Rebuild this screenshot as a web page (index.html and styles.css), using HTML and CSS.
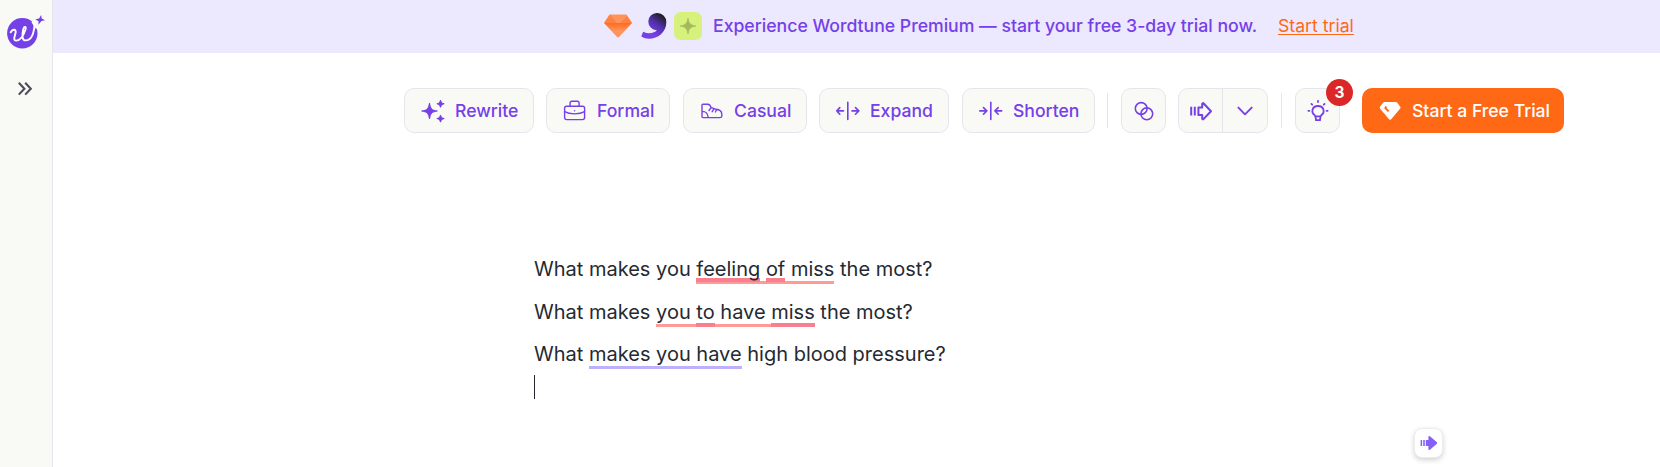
FILE: index.html
```html
<!DOCTYPE html>
<html lang="en">
<head>
<meta charset="utf-8">
<title>Wordtune Editor</title>
<link rel="stylesheet" href="styles.css">
</head>
<body>
<div class="app">
  <aside class="sidebar">
    <svg class="logo" width="40" height="40" viewBox="0 0 40 40">
      <circle cx="16.3" cy="21.2" r="15.2" fill="#7540e8"/>
      <path d="M25.5 10.5L30 3.5L37 12L30 17Z" fill="#f9faf5"/>
      <path d="M4.7 20.3C6.8 16.5 10.7 17 9.5 21.2C8.2 25.5 7.2 28.8 10.4 28.6C14.8 28.3 18 22 19.5 17.5C20.5 14 18 14 17.2 17.5C16 22.5 15.8 28.3 19.5 28.4C25.5 28.5 28.4 20.5 28.7 9.5" fill="none" stroke="#fff" stroke-width="1.9" stroke-linecap="round"/>
      <path d="M35.1 3L35.7 6.6L39.1 8.2L35.5 9.1L32.4 12.7L32.6 9.2L29.3 7.2L33.1 6.4Z" fill="#7540e8"/>
    </svg>
    <svg class="expand" width="14" height="14" viewBox="0 0 14 14" fill="none" stroke="#4b4b59" stroke-width="2.1"><path d="M.8 .8L6.4 6.7L.8 12.6M7.2 .8L12.8 6.7L7.2 12.6"/></svg>
  </aside>
  <main class="main">
    <div class="banner">
      <svg class="gem" width="28" height="24" viewBox="0 0 28 24">
        <defs><linearGradient id="gem-low" x2="0" y2="1"><stop stop-color="#ff6b1f"/><stop offset=".55" stop-color="#ff935c"/></linearGradient></defs>
        <path d="M5.5.5H22.5L28 9H0Z" fill="#ff935c"/><path d="M0 9L6 .8L13 9ZM16 9L28 9L23 2Z" fill="#ff8142"/><path d="M0 9H28L15.2 22.8Q14 24 12.8 22.8Z" fill="url(#gem-low)"/>
      </svg>
      <svg class="comma" width="26" height="26" viewBox="0 0 26 26">
        <defs><linearGradient id="ink" x1=".9" y1=".1" x2=".4" y2=".8"><stop offset=".05" stop-color="#202024"/><stop offset=".5" stop-color="#5130ad"/><stop offset="1" stop-color="#7540e8"/></linearGradient></defs>
        <path d="M16.2 0A9 9 0 0 1 25.3 9.5C25.3 19 17 25.8 8 25.8Q3.5 25.8.3 23.4L2.1 18.8Q9 22 14.5 18.5Q16 17.6 15.7 17.2A8.6 8.6 0 1 1 16.2 0Z" fill="url(#ink)"/>
      </svg>
      <svg class="tile" width="28" height="28" viewBox="0 0 28 28"><rect width="28" height="28" rx="6.5" fill="#d7f27c"/><path d="M14 6C14.8 11.5 16.5 13.2 22 14C16.5 14.8 14.8 16.5 14 22C13.2 16.5 11.5 14.8 6 14C11.5 13.2 13.2 11.5 14 6Z" fill="#a3b85f" stroke="#a3b85f" stroke-width=".7"/></svg>
      <span class="banner-text">Experience Wordtune Premium — start your free 3-day trial now.</span>
      <a class="banner-link">Start trial</a>
    </div>
    <div class="toolbar">
      <button class="btn rewrite"><svg width="24" height="24" viewBox="0 0 24 24" fill="#7540e8" stroke="#7540e8" stroke-linejoin="round"><path d="M8.5 4C9.5 9.8 10.7 11.3 16.3 12C10.7 12.9 9.5 14.3 8.5 20C7.5 14.3 6.3 12.9.7 12C6.3 11.3 7.5 9.8 8.5 4Z"/><path stroke-width="1.1" d="M19.5 1.5L20.5 3.9L22.9 4.8L20.5 5.7L19.5 8L18.5 5.7L16.2 4.8L18.5 3.9ZM19.5 16.4L20.5 18.7L22.9 19.6L20.5 20.5L19.5 22.8L18.5 20.5L16.2 19.6L18.5 18.7Z"/></svg><span>Rewrite</span></button>
      <button class="btn formal"><svg width="24" height="24" viewBox="0 0 24 24" fill="none" stroke="#7540e8" stroke-width="1.4"><rect x="1.6" y="7.3" width="20" height="13.3" rx="2"/><path d="M7.1 7.1V4.1Q7.1 2.2 8.8 2.2H14.4Q16.1 2.2 16.1 4.1V7.1M1.6 12.6C6.6 15.6 16.6 15.6 21.6 12.6"/><circle cx="11.6" cy="11.8" r=".7" fill="#7540e8" stroke="none"/></svg><span>Formal</span></button>
      <button class="btn casual"><svg width="24" height="24" viewBox="0 0 24 24" fill="none" stroke="#7540e8" stroke-width="1.4" stroke-linejoin="round" stroke-linecap="round"><path d="M2 17.7V6Q2 5.2 3 5.2H7.8Q10.2 5.4 11 8.4L16 10.3C19.5 10.6 21.7 12.3 21.8 15.2V17Q21.8 18.6 20 18.6H3.5Q2 18.6 2 17.7ZM2 12.4Q7.5 12.2 8.2 18.4M11.1 8.6L9 11.5M14 9.8L12.2 12.7M16.7 10.5L15.4 13"/></svg><span>Casual</span></button>
      <button class="btn resize"><svg width="24" height="24" viewBox="0 0 24 24" fill="none" stroke="#7540e8" stroke-width="1.6" stroke-linejoin="round" stroke-linecap="round"><path d="M11.8 3.3V20.4M7.5 11.9H.9M3.8 8.6L.8 11.9L3.8 15.2M16 11.9H22.5M19.5 8.6L22.8 11.9L19.5 15.2"/></svg><span>Expand</span></button>
      <button class="btn shorten"><svg width="24" height="24" viewBox="0 0 24 24" fill="none" stroke="#7540e8" stroke-width="1.6" stroke-linejoin="round" stroke-linecap="round"><path d="M11.8 3.3V20.4M.8 11.9H7.5M4.5 8.6L7.8 11.9L4.5 15.2M22.7 11.9H16.3M19.2 8.6L15.9 11.9L19.2 15.2"/></svg><span>Shorten</span></button>
      <i class="rule"></i>
      <button class="btn icon"><svg width="22" height="22" viewBox="0 0 22 22" fill="none" stroke="#7540e8" stroke-width="1.6"><circle cx="8.2" cy="8.5" r="5.9"/><circle cx="13.8" cy="13.8" r="5.9"/></svg></button>
      <div class="split">
        <button><svg width="24" height="24" viewBox="0 0 24 24" fill="none" stroke="#7540e8" stroke-width="2" stroke-linejoin="round"><path d="M2.2 7.7V16.6M5.8 7.7V16.6M10.2 8.4H13.2V4.7L14.2 4L22 12.2L14.2 20.4L13.2 19.7V16H9.4V8.4Z"/></svg></button>
        <button><svg width="20" height="20" viewBox="0 0 20 20" fill="none" stroke="#7540e8" stroke-width="1.9" stroke-linecap="round" stroke-linejoin="round"><path d="M3.4 6.6L10 13.3L16.7 6.6"/></svg></button>
      </div>
      <i class="rule"></i>
      <button class="btn icon ideas"><svg width="22" height="24" viewBox="0 0 22 24" fill="none" stroke="#7540e8" stroke-width="1.8" stroke-linecap="round"><path d="M8.5 17.5L7.5 16C3.8 13.5 5 7 11 7S18.2 13.5 14.5 16L13.5 17.5L13 21.2H9ZM8.3 17.4H13.7M11 1.8V3M4.4 4.9L5.2 5.7M17.6 4.9L16.8 5.7M1.4 11.8H2.4M19.6 11.8H20.6"/></svg><span class="badge">3</span></button>
      <button class="cta"><svg width="22" height="20" viewBox="0 0 22 20"><path d="M5.2 1H17Q17.8 1 18.3 1.8L21.4 6Q21.8 6.8 21.2 7.5L12.2 18.3Q11.1 19.4 10 18.3L1 7.5Q.4 6.8.9 6L4.2 1.6Q4.6 1 5.2 1Z" fill="#fff"/><path d="M7.3 5.5L6.4 7.1L9.6 10.4" fill="none" stroke="#ff6815" stroke-width="1.9"/></svg><span>Start a Free Trial</span></button>
    </div>
    <div class="editor">
      <p>What makes you <span class="issue low"><span class="word">feeling</span> <span class="word">of</span> miss</span> the most?</p>
      <p>What makes <span class="issue">you <span class="hit">to</span> have <span class="hit">miss</span></span> the most?</p>
      <p>What <span class="hint">makes you have</span> high blood pressure?</p>
      <div class="caret"></div>
    </div>
    <div class="floating"><svg width="18" height="18" viewBox="0 0 18 18" fill="#8560f4"><path d="M.6 6H2.1V12H.6ZM3.2 6H4.8V12H3.2ZM5.8 6H8.4V3Q8.4 1.4 9.9 2.2L16.9 8.3Q17.4 9 16.9 9.7L9.9 15.8Q8.4 16.6 8.4 15V12H5.8Z"/></svg></div>
  </main>
</div>
</body>
</html>
```
FILE: styles.css
```css
* { box-sizing: border-box; }
body { margin: 0; font-family: Inter, sans-serif; background: #fff; }
button { font: inherit; margin: 0; padding: 0; border: 0; }
svg { display: block; flex: none; }
.app { display: flex; width: 1660px; height: 467px; overflow: hidden; }
.sidebar { width: 53px; flex: none; background: #f9faf5; border-right: 1px solid #e5e6ec; }
.logo { margin: 12px 0 0 6px; }
.expand { margin: 30px 0 0 18px; }
.main { flex: 1; position: relative; }
.banner { height: 53px; background: #ece8fe; display: flex; align-items: flex-start; padding-left: 551px; font-size: 17.65px; line-height: 28px; }
.gem { margin-top: 14px; }
.comma { margin: 13px 0 0 8.5px; }
.tile { margin: 12px 0 0 7.5px; }
.banner-text { margin: 12px 0 0 11px; width: 565px; color: #7540e8; font-weight: 500; white-space: nowrap; }
.banner-link { margin-top: 12px; color: #ff6815; text-decoration: underline; text-underline-offset: 2px; text-decoration-thickness: 1px; white-space: nowrap; }
.toolbar { display: flex; align-items: center; height: 45px; margin: 35px 0 0 351px; font-size: 17.6px; color: #7540e8; }
.btn { display: flex; align-items: center; height: 45px; border: 1px solid #e5e6ec; border-radius: 10px; background: #f9faf5; color: #7540e8; padding-left: 16px; gap: 10px; font-weight: 500; flex: none; white-space: nowrap; }
.rewrite { width: 130px; }
.formal { width: 124px; margin-left: 12px; }
.casual { width: 124px; margin-left: 13px; }
.resize { width: 130px; margin-left: 12px; }
.shorten { width: 133px; margin-left: 13px; }
.rule { width: 1px; height: 35px; background: #e5e6ec; margin: 0 13px 0 12px; flex: none; }
.icon { width: 45px; padding: 0; justify-content: center; }
.split { display: flex; width: 90px; height: 45px; margin: 0 1px 0 12px; border: 1px solid #e5e6ec; border-radius: 10px; background: #f9faf5; flex: none; }
.split button { width: 43px; display: flex; align-items: center; justify-content: center; background: none; }
.split button + button { width: 45px; border-left: 1px solid #e5e6ec; }
.ideas { position: relative; }
.badge { position: absolute; left: 30px; top: -10.5px; width: 27px; height: 27px; border-radius: 50%; background: #db2727; color: #fff; font-size: 15.4px; font-weight: 700; line-height: 27px; text-align: center; }
.cta { display: flex; align-items: center; width: 202px; height: 45px; margin-left: 22px; padding-left: 17px; gap: 11px; border-radius: 10px; background: #ff6815; color: #fff; font-weight: 500; white-space: nowrap; flex: none; }
.editor { margin: 115px 0 0 481px; font-size: 20px; color: #252a31; }
.editor p { margin: 0; height: 42.5px; line-height: 42.5px; white-space: nowrap; }
.issue, .hint { padding-bottom: 3px; background: linear-gradient(#ff9b97, #ff9b97) left bottom / 100% 3px no-repeat; }
.hint { background-image: linear-gradient(#bfb0fb, #bfb0fb); }
.low .word, .hit { padding-bottom: 3px; background: linear-gradient(#f87f90, #f87f90) left bottom / 100% 4px no-repeat; }
.low .word { padding-bottom: 1px; }
.caret { width: 1px; height: 24px; background: #22252b; margin-top: -1px; }
.floating { position: absolute; left: 1361px; top: 428px; width: 29px; height: 30px; border-radius: 8px; border: 1px solid #ecedf0; background: #fff; box-shadow: 0 2px 5px rgba(30, 30, 40, .2); display: flex; align-items: center; justify-content: center; }
```
